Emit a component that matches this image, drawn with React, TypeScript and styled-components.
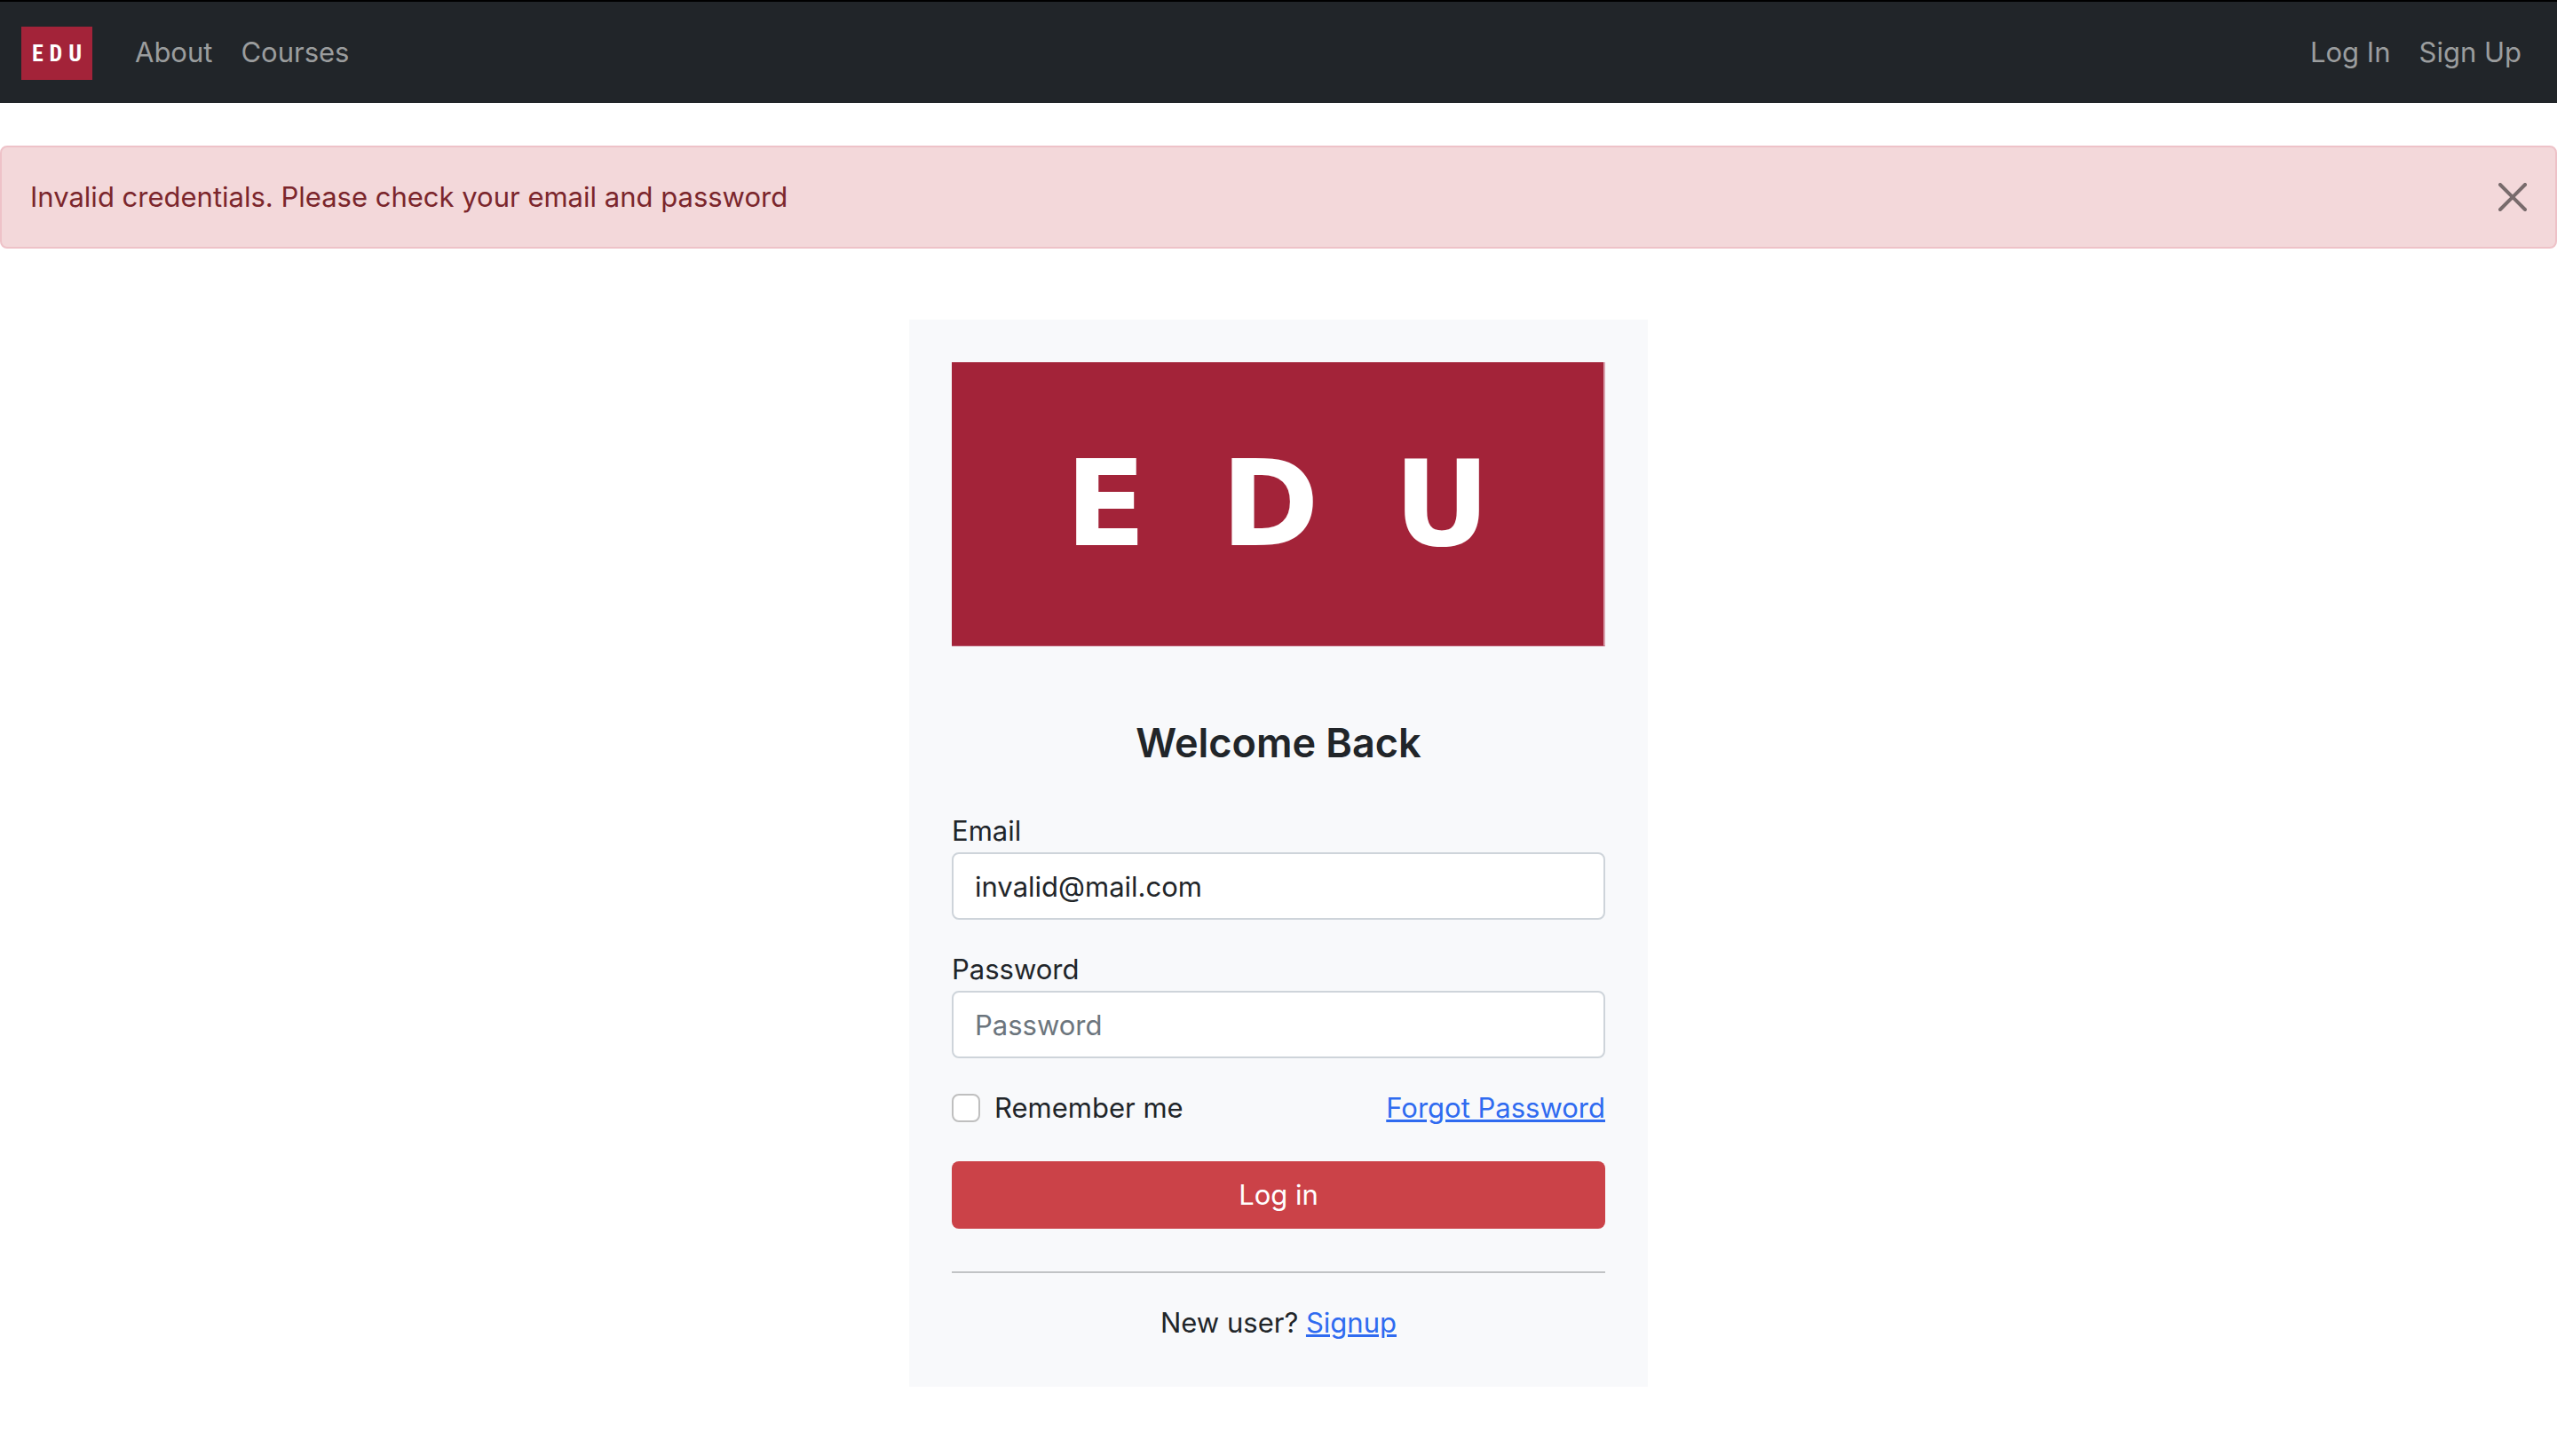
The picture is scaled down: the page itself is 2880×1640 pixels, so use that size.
import React, { useState } from "react";
import styled, { createGlobalStyle } from "styled-components";

const GlobalStyle = createGlobalStyle`
  *, *::before, *::after { box-sizing: border-box; }
  body {
    margin: 0;
    background: #fff;
    color: #212529;
    font-family: Inter, "Liberation Sans", sans-serif;
    font-size: 31px;
    line-height: 48px;
  }
`;

const Navbar = styled.nav`
  display: flex;
  align-items: center;
  gap: 32px;
  padding: 28px 24px 26px;
  background: #212529;
  border-top: 2px solid #000;
`;

const Brand = styled.a`
  display: flex;
  align-items: center;
  justify-content: space-between;
  width: 80px;
  height: 60px;
  padding: 0 12px;
  background: #a32339;
  color: #fff;
  font: 700 26px/60px "Liberation Sans Narrow", "Roboto Condensed", Lato, sans-serif;
  text-decoration: none;
`;

const NavList = styled.ul<{ $end?: boolean }>`
  display: flex;
  margin: 0;
  margin-left: ${(p) => (p.$end ? "auto" : "0")};
  padding: 0;
  list-style: none;
`;

const NavLink = styled.a`
  display: block;
  padding: 0 16px 2px;
  color: #9b9d9e;
  text-decoration: none;
`;

const Alert = styled.div`
  display: flex;
  align-items: center;
  justify-content: space-between;
  margin-top: 48px;
  padding: 32px;
  background: #f3d8da;
  border: 2px solid #eec2c8;
  border-radius: 8px;
  color: #7b262c;
`;

const CloseButton = styled.button`
  display: flex;
  padding: 0;
  border: 0;
  background: none;
  color: #000;
  opacity: 0.5;
  cursor: pointer;
`;

const Card = styled.main`
  width: 100%;
  max-width: 832px;
  margin: 80px auto 0;
  padding: 48px;
  background: #f8f9fb;
`;

const Logo = styled.div`
  display: flex;
  align-items: center;
  justify-content: space-between;
  height: 320px;
  padding: 0 128px;
  background: #a32339;
  border-right: 2px solid #d9a3af;
  border-bottom: 1px solid #b8566c;
  color: #fff;
  font: 700 133px/160px "DejaVu Sans", sans-serif;
`;

const Title = styled.h1`
  margin: 80px 0 46px;
  font-size: 45px;
  font-weight: 600;
  line-height: 58px;
  text-align: center;
`;

const Form = styled.form`
  display: flex;
  flex-direction: column;
`;

const Field = styled.div`
  display: flex;
  flex-direction: column;
  margin-bottom: 32px;
`;

const TextInput = styled.input`
  width: 100%;
  height: 76px;
  padding: 0 24px;
  border: 2px solid #ced4da;
  border-radius: 8px;
  background: #fff;
  color: inherit;
  font: inherit;
  &::placeholder {
    color: #6c757d;
    opacity: 1;
  }
`;

const Options = styled.div`
  display: flex;
  align-items: center;
  justify-content: space-between;
  margin-bottom: 36px;
`;

const CheckLabel = styled.label`
  display: flex;
  align-items: center;
  gap: 16px;
`;

const Checkbox = styled.input`
  appearance: none;
  width: 32px;
  height: 32px;
  margin: 0;
  border: 2px solid #bfbfbf;
  border-radius: 8px;
  background: #fff;
  &:checked {
    background: #2f6bf0;
    border-color: #2f6bf0;
  }
`;

const TextLink = styled.a`
  color: #2f6bf0;
  text-decoration: underline;
`;

const SubmitButton = styled.button`
  height: 76px;
  border: 0;
  border-radius: 8px;
  background: #cb4248;
  color: #fff;
  font: inherit;
  cursor: pointer;
`;

const Divider = styled.hr`
  height: 2px;
  margin: 48px 0 32px;
  border: 0;
  background: #c1c3c5;
`;

const Footer = styled.p`
  margin: 0;
  text-align: center;
`;

function LogoLetters() {
  return (
    <>
      <span>E</span>
      <span>D</span>
      <span>U</span>
    </>
  );
}

function CloseIcon() {
  return (
    <svg width="32" height="32" viewBox="0 0 16 16" fill="currentColor" aria-hidden="true">
      <path d="M.293.293a1 1 0 011.414 0L8 6.586 14.293.293a1 1 0 111.414 1.414L9.414 8l6.293 6.293a1 1 0 01-1.414 1.414L8 9.414l-6.293 6.293a1 1 0 01-1.414-1.414L6.586 8 .293 1.707a1 1 0 010-1.414z" />
    </svg>
  );
}

export default function App() {
  const [email, setEmail] = useState("invalid@mail.com");
  const [password, setPassword] = useState("");
  const [alertOpen, setAlertOpen] = useState(true);

  return (
    <>
      <GlobalStyle />
      <Navbar>
        <Brand href="#">
          <LogoLetters />
        </Brand>
        <NavList>
          <li><NavLink href="#about">About</NavLink></li>
          <li><NavLink href="#courses">Courses</NavLink></li>
        </NavList>
        <NavList $end>
          <li><NavLink href="#login">Log In</NavLink></li>
          <li><NavLink href="#signup">Sign Up</NavLink></li>
        </NavList>
      </Navbar>
      {alertOpen && (
        <Alert role="alert">
          <span>Invalid credentials. Please check your email and password</span>
          <CloseButton type="button" aria-label="Close" onClick={() => setAlertOpen(false)}>
            <CloseIcon />
          </CloseButton>
        </Alert>
      )}
      <Card>
        <Logo>
          <LogoLetters />
        </Logo>
        <Title>Welcome Back</Title>
        <Form onSubmit={(e) => e.preventDefault()}>
          <Field>
            <label htmlFor="email">Email</label>
            <TextInput
              id="email"
              type="email"
              placeholder="Email"
              value={email}
              onChange={(e) => setEmail(e.target.value)}
            />
          </Field>
          <Field>
            <label htmlFor="password">Password</label>
            <TextInput
              id="password"
              type="password"
              placeholder="Password"
              value={password}
              onChange={(e) => setPassword(e.target.value)}
            />
          </Field>
          <Options>
            <CheckLabel htmlFor="remember">
              <Checkbox id="remember" type="checkbox" />
              Remember me
            </CheckLabel>
            <TextLink href="#forgot">Forgot Password</TextLink>
          </Options>
          <SubmitButton type="submit">Log in</SubmitButton>
        </Form>
        <Divider />
        <Footer>
          New user? <TextLink href="#signup">Signup</TextLink>
        </Footer>
      </Card>
    </>
  );
}
